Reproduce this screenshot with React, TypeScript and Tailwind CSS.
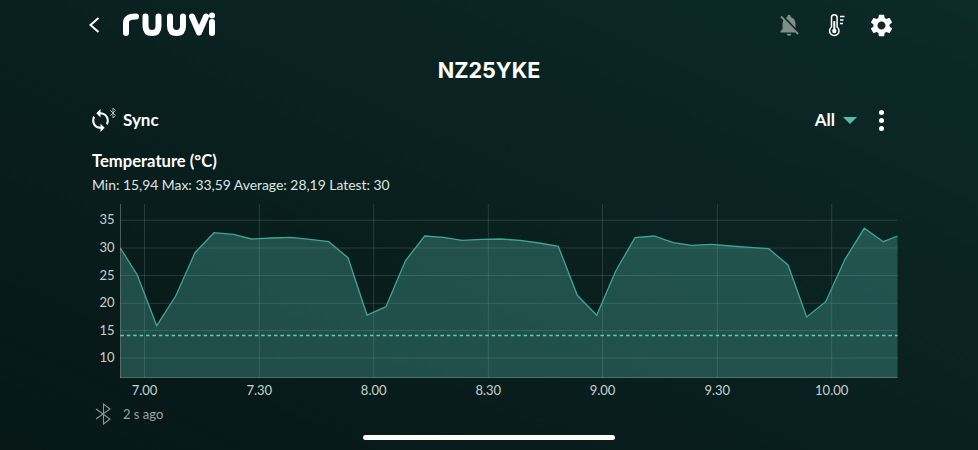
import { Bluetooth } from 'lucide-react';
import { MdNotificationsOff, MdSettings, MdSync } from 'react-icons/md';

const points = [
  [120.5, 248.3], [137.3, 275], [156.7, 325.7], [175.7, 296], [195, 252.7], [214, 232.7],
  [233.3, 234.3], [251.7, 239], [271.7, 238], [291, 237.3], [310, 239.3], [328.7, 241.7],
  [348, 257.7], [367, 315], [386, 306.7], [405.3, 261], [424.7, 236], [443.3, 237.3],
  [462.3, 240.3], [481.7, 239.3], [500.7, 239], [520, 240.3], [539.3, 243], [558.3, 246.3],
  [577.3, 295.3], [596.7, 315.3], [615.7, 271], [635, 237.7], [654, 236], [673.3, 242.7],
  [691.7, 245.3], [711.7, 244.3], [730.7, 246], [750, 247.3], [768.7, 248.7], [788, 265],
  [806.7, 317], [825.7, 301.7], [845, 259.3], [864.3, 228.3], [883.3, 241.7], [897.5, 236],
];

const yTicks = [
  { label: '35', y: 220.3 },
  { label: '30', y: 248 },
  { label: '25', y: 275.5 },
  { label: '20', y: 303.3 },
  { label: '15', y: 330.5 },
  { label: '10', y: 358 },
];

const xTicks = [
  { label: '7.00', x: 144.5 },
  { label: '7.30', x: 259.3 },
  { label: '8.00', x: 373.7 },
  { label: '8.30', x: 488.3 },
  { label: '9.00', x: 602.5 },
  { label: '9.30', x: 717.3 },
  { label: '10.00', x: 831.7 },
];

const line = points.map((p) => p.join(',')).join(' ');

const Chart = () => (
  <svg viewBox="92 204 806 198" className="block w-[806px] h-[198px]">
    {yTicks.map((t) => (
      <line key={t.label} x1="120.5" x2="897.5" y1={t.y} y2={t.y} stroke="#ffffff" strokeOpacity="0.13" />
    ))}
    {xTicks.map((t) => (
      <line key={t.label} x1={t.x} x2={t.x} y1="204" y2="377.5" stroke="#ffffff" strokeOpacity="0.13" />
    ))}
    <polygon points={`120.5,377.5 ${line} 897.5,377.5`} fill="#5cc4b4" fillOpacity="0.3" />
    <polyline points={line} fill="none" stroke="#3fa595" strokeWidth="1.3" />
    <line x1="120.5" x2="897.5" y1="335.5" y2="335.5" stroke="#56d6c0" strokeWidth="1.4" strokeDasharray="3.4 3" />
    <line x1="120.5" x2="120.5" y1="204" y2="378" stroke="#ffffff" strokeOpacity="0.28" />
    <line x1="120" x2="897.5" y1="377.5" y2="377.5" stroke="#ffffff" strokeOpacity="0.28" />
    {yTicks.map((t) => (
      <text key={t.label} x="114.5" y={t.y + 4} textAnchor="end" fontSize="13" fill="#c9d1cf" fontFamily="Lato, sans-serif">
        {t.label}
      </text>
    ))}
    {xTicks.map((t) => (
      <text key={t.label} x={t.x} y="394.5" textAnchor="middle" fontSize="13" fill="#c9d1cf" fontFamily="Lato, sans-serif">
        {t.label}
      </text>
    ))}
  </svg>
);

const Logo = () => (
  <svg viewBox="122 12 94 26" className="w-[94px] h-[26px]" fill="none" stroke="#ffffff" strokeWidth="6" strokeLinecap="round" strokeLinejoin="round">
    <path d="M126 33V23C126 18 129 16.5 136 16.5" />
    <path d="M145.5 16.5V26C145.5 31 148 33 152 33C156 33 158.5 31 158.5 26V16.5" />
    <path d="M170 16.5V26C170 31 172.5 33 176.5 33C180.5 33 183 31 183 26V16.5" />
    <path d="M192 16.5L199 32.5L206 16.5" />
    <path d="M212 22V33" />
    <circle cx="212" cy="15.5" r="3" fill="#ffffff" stroke="none" />
  </svg>
);

const Thermometer = () => (
  <svg viewBox="0 0 18 24" className="w-[18px] h-[24px]" fill="none" stroke="#ffffff">
    <path d="M3.5 14V4.5a2.8 2.8 0 0 1 5.6 0V14a4.7 4.7 0 1 1-5.6 0Z" strokeWidth="1.5" />
    <path d="M6.3 8V18" strokeWidth="2" />
    <circle cx="6.3" cy="18" r="2.2" fill="#ffffff" stroke="none" />
    <path d="M12 3.5h4.5M12 7h3.5M12 10.5h3" strokeWidth="1.3" />
  </svg>
);

export default function App() {
  return (
    <div className="relative w-[978px] h-[450px] overflow-hidden bg-gradient-to-bl from-[#0c2a27] via-[#09201f] to-[#061716] text-white font-['Lato',sans-serif]">
      <header className="h-[50px] pl-[88px] pr-[83px] flex items-center justify-between">
        <div className="flex items-center gap-[22px]">
          <svg viewBox="0 0 12 16" className="w-[12px] h-[16px]" fill="none" stroke="#ffffff" strokeWidth="2">
            <path d="M10.5 1L2.5 8L10.5 15" />
          </svg>
          <Logo />
        </div>
        <div className="flex items-center">
          <MdNotificationsOff className="text-[#7d8f8b]" size={26} />
          <div className="ml-[26px] mr-[22px]">
            <Thermometer />
          </div>
          <MdSettings size={27} />
        </div>
      </header>

      <h1 className="mt-[7px] text-center text-[21.6px] leading-[26px] font-bold font-['Inter',sans-serif]">NZ25YKE</h1>

      <div className="mt-[24px] pl-[92px] pr-[94px] h-[26px] flex items-center justify-between">
        <div className="flex items-center gap-[13px]">
          <div className="relative w-[18px] h-[24px] flex items-center">
            <MdSync size={25} className="-ml-[4px] shrink-0" />
            <Bluetooth size={12} strokeWidth={1.6} className="absolute -top-[1px] -right-[9px] text-[#c9d1cf]" />
          </div>
          <span className="text-[17px] font-bold">Sync</span>
        </div>
        <div className="flex items-center">
          <span className="text-[17px] font-bold">All</span>
          <div className="ml-[8px] w-0 h-0 border-x-[7px] border-x-transparent border-t-[7px] border-t-[#4fc0aa]" />
          <div className="ml-[22px] flex flex-col gap-[3px]">
            <div className="w-[5px] h-[5px] rounded-full bg-white" />
            <div className="w-[5px] h-[5px] rounded-full bg-white" />
            <div className="w-[5px] h-[5px] rounded-full bg-white" />
          </div>
        </div>
      </div>

      <div className="mt-[18px] pl-[92px] text-[16.6px] leading-[20px] font-bold">Temperature (°C)</div>
      <div className="mt-[5px] pl-[92px] text-[13.9px] leading-[18px] text-[#dfe5e3]">
        Min: 15,94 Max: 33,59 Average: 28,19 Latest: 30
      </div>

      <div className="mt-[10px] pl-[92px]">
        <Chart />
      </div>

      <div className="mt-[1px] pl-[95px] flex items-center gap-[12px] text-[13px] leading-[20px] text-[#9aa6a3]">
        <svg viewBox="0 0 16 22" className="w-[16px] h-[22px]" fill="none" stroke="#8a9895" strokeWidth="1.1">
          <path d="M1 6L15 16L8.5 21V1L15 6L1 16" />
        </svg>
        <span>2 s ago</span>
      </div>

      <div className="absolute left-[363px] top-[435px] w-[252px] h-[5px] rounded-full bg-white" />
    </div>
  );
}
